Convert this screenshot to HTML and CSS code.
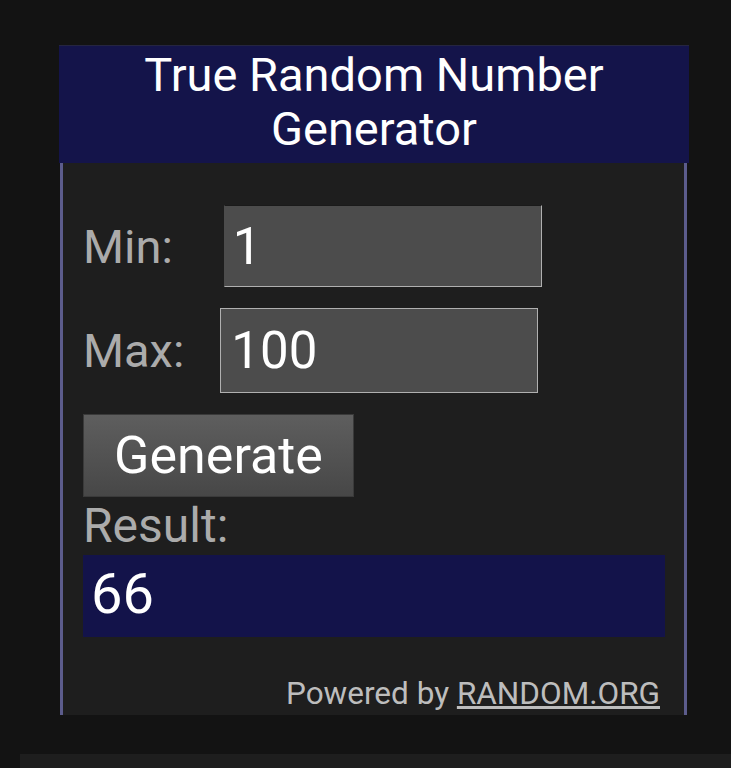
FILE: index.html
```html
<!DOCTYPE html>
<html lang="en">
<head>
<meta charset="UTF-8" />
<meta name="viewport" content="width=device-width, initial-scale=1" />
<title>True Random Number Generator</title>
<link rel="stylesheet" href="styles.css">
</head>
<body>
<div class="widget">
    <div class="widget-head">True Random Number<br>Generator</div>
    <div class="widget-body">
        <div class="row row-min">
            <label for="min">Min:</label>
            <input type="text" id="min" class="field" value="1" />
        </div>
        <div class="row row-max">
            <label for="max">Max:</label>
            <input type="text" id="max" class="field" value="100" />
        </div>
        <button class="generate">Generate</button>
        <div class="result-label">Result:</div>
        <div class="result">66</div>
        <div class="powered">Powered by <a href="#">RANDOM.ORG</a></div>
    </div>
</div>
<div class="bottom-bar"></div>
</body>
</html>
```

FILE: styles.css
```css
body {
    margin: 0;
    font-family: Roboto, 'Noto Sans', sans-serif;
    background-color: #131313;
    height: 768px;
    overflow: hidden;
}
.widget {
    width: 630px;
    margin: 45px 0 0 59px;
}
.widget-head {
    background-color: #14144a;
    border-top: 1px solid #252540;
    color: #fff;
    text-align: center;
    font-size: 47px;
    line-height: 54px;
    padding-top: 2px;
    box-sizing: border-box;
    height: 118px;
}
.widget-body {
    background-color: #1e1e1e;
    margin: 0 2px 0 1px;
    border-left: 3px solid #5c5c8c;
    border-right: 3px solid #5c5c8c;
    padding: 42px 20px 3px 20px;
    height: 552px;
    box-sizing: border-box;
}
.row {
    display: flex;
    align-items: center;
    margin-bottom: 21px;
}
.row label {
    color: #ababab;
    font-size: 47px;
}
.field {
    background-color: #4c4c4c;
    color: #fff;
    font-family: Roboto, 'Noto Sans', sans-serif;
    font-size: 51px;
    padding: 0 8px;
    width: 318px;
    box-sizing: border-box;
    outline: none;
}
.row-min .field {
    margin-left: 51px;
    height: 82px;
    border: 1px solid #b0b0b0;
    border-top-color: #1a1a1a;
    border-left-color: #4c4c4c;
}
.row-max .field {
    margin-left: 36px;
    height: 85px;
    border: 1px solid #b0b0b0;
    padding-left: 10px;
}
.generate {
    display: block;
    width: 271px;
    height: 83px;
    background: linear-gradient(#5e5e5e, #474747);
    border: 1px solid #3a3a3a;
    color: #fff;
    font-family: Roboto, 'Noto Sans', sans-serif;
    font-size: 52px;
    padding: 0;
    cursor: pointer;
}
.result-label {
    color: #ababab;
    font-size: 48px;
    line-height: 50px;
    margin-top: 4px;
}
.result {
    background-color: #13134a;
    color: #fff;
    font-size: 56px;
    height: 82px;
    line-height: 78px;
    padding-left: 8px;
    margin-top: 4px;
    width: 582px;
    box-sizing: border-box;
}
.powered {
    text-align: right;
    color: #bdbdbd;
    font-size: 31.5px;
    margin-top: 38px;
    padding-right: 4px;
}
.powered a {
    color: #bdbdbd;
}
.bottom-bar {
    margin: 39px 0 0 20px;
    height: 20px;
    background-color: #1e1e1e;
}
```
